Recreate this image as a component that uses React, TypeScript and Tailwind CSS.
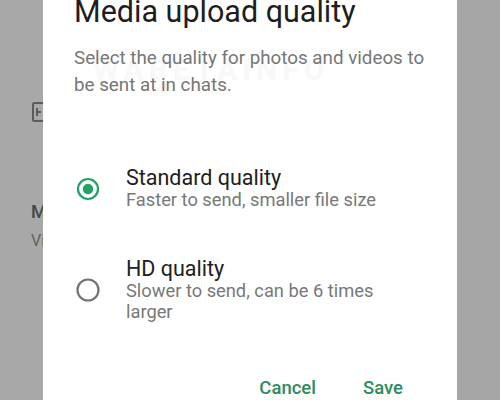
import React from "react";

const font = { fontFamily: "Roboto, 'Noto Sans', sans-serif" };

function Radio({ checked }: { checked: boolean }) {
  return checked ? (
    <svg width="24" height="24" viewBox="0 0 24 24" className="shrink-0">
      <circle cx="12" cy="12" r="10" fill="none" stroke="#23a166" strokeWidth="2.2" />
      <circle cx="12" cy="12" r="5.2" fill="#23a166" />
    </svg>
  ) : (
    <svg width="24" height="24" viewBox="0 0 24 24" className="shrink-0">
      <circle cx="12" cy="12" r="10.5" fill="none" stroke="#727272" strokeWidth="2.2" />
    </svg>
  );
}

function Option({
  checked,
  title,
  desc,
}: {
  checked: boolean;
  title: string;
  desc: string;
}) {
  return (
    <div className="flex items-center">
      <div className="w-[52px] pl-[2px] flex">
        <Radio checked={checked} />
      </div>
      <div className="flex flex-col">
        <span className="text-[21.5px] leading-[22px] text-[#202020]">{title}</span>
        <span className="text-[18.3px] leading-[21px] text-[#787878] w-[260px]">{desc}</span>
      </div>
    </div>
  );
}

export default function App() {
  return (
    <div className="w-[500px] h-[400px] bg-[#a8a8a8] flex overflow-hidden" style={font}>
      <div className="w-[43px] shrink-0 overflow-hidden">
        <div className="pl-[31px] pt-[101px] flex flex-col w-[80px]">
          <svg width="22" height="22" viewBox="0 0 22 22">
            <rect x="2" y="2" width="18" height="18" rx="1.5" fill="none" stroke="#5a5a5a" strokeWidth="2" />
            <path d="M6 7v8M6 11h4" stroke="#5a5a5a" strokeWidth="2" fill="none" />
          </svg>
          <span className="mt-[77px] text-[18px] leading-[24px] font-medium text-[#3f4a45]">Media</span>
          <span className="mt-[6px] text-[16px] leading-[22px] text-[#5d6360]">Video</span>
        </div>
      </div>
      <div className="w-[414px] shrink-0 bg-white relative flex flex-col pl-[31px]">
        <div className="absolute left-[50px] top-[54px] text-[30px] leading-[32px] font-bold tracking-[5px] text-[#f8f8f8] select-none">
          WABETAINFO
        </div>
        <h1 className="relative -mt-[6px] text-[30.5px] leading-[36px] text-[#1e1e1e]">
          Media upload quality
        </h1>
        <p className="relative mt-[15px] text-[18.8px] leading-[27px] text-[#767676] w-[364px]">
          Select the quality for photos and videos to be sent at in chats.
        </p>
        <div className="mt-[68px]">
          <Option checked title="Standard quality" desc="Faster to send, smaller file size" />
        </div>
        <div className="mt-[48px]">
          <Option checked={false} title="HD quality" desc="Slower to send, can be 6 times larger" />
        </div>
        <div className="mt-auto flex justify-end pr-[54px] gap-[47px] text-[18.5px] leading-[24px] font-medium text-[#2f8c5e]">
          <span>Cancel</span>
          <span>Save</span>
        </div>
      </div>
      <div className="flex-1 bg-[#a6a6a6]" />
    </div>
  );
}
